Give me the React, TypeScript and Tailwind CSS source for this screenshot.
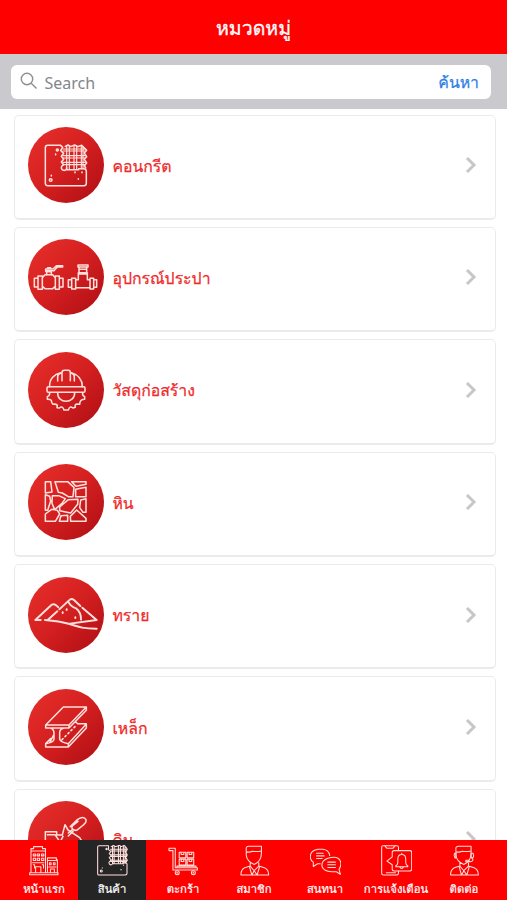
import React from "react";

const THAI = "font-['Loma','Liberation_Sans',sans-serif]";

type Kind = "block" | "pipes" | "helmet" | "stone" | "sand" | "steel" | "soil";

// Every category drawing shares a 228-unit disc.
const discBox: Record<Kind, string> = {
  block: "86 52 228 228",
  pipes: "86 45 228 228",
  helmet: "86 52 228 228",
  stone: "86 45 228 228",
  sand: "86 52 228 228",
  steel: "86 52 228 228",
  soil: "86 52 228 228",
};

const drawings: Record<Kind, React.ReactNode> = {
  block: (
    <>
      <path d="M184 107H145Q138 107 138 114V221Q138 228 145 228H254Q261 228 261 221V185Q261 177 253 177H238V180H202V173A8 8 0 1 1 188 169L193 165L186 157L193 149L186 140L193 131L184 122L190 113Z" />
      <path d="M202 108V177M210 108V177M224 108V177M232 108V177M246 108V177M251 112V177" strokeWidth="3.5" />
      <path d="M191 118H258M191 124H258M191 138H258M191 145H258M191 158H258M191 165H258" strokeWidth="3.5" />
      <path d="M198 110L206 106L214 111L226 106L235 111L247 107L256 116L262 122L255 130L262 141L255 149L262 160L255 168L259 175" />
      <circle cx="174" cy="121" r="3" /><circle cx="154" cy="211" r="4" />
      <path d="M169 133V135M156 197V199M237 207V209M248 187V189M227 187V189" />
    </>
  ),
  pipes: (
    <>
      <path d="M105 163H116V189H105ZM116 156H129V196H116ZM168 156H180V196H168ZM180 163H191V189H180ZM129 161L137 152H160L168 161V187L160 194H137L129 187ZM129 176V194" />
      <path d="M142 152V143H156V152M139 142V135H161L172 125H190V129H174L164 140H142ZM145 134V131H154V134" />
      <path d="M207 167H217V190H207ZM217 163H229V195H217ZM272 163H283V195H272ZM283 167H292V190H283ZM229 167H237V146H264V167H272M229 191H272M236 123H266V129H236ZM239 129H262V146H239ZM239 136H262M238 150H263" />
    </>
  ),
  helmet: (
    <>
      <rect x="143" y="156" width="114" height="17" rx="4" />
      <path d="M151 156C149 133 166 118 184 114M216 114C236 120 249 135 249 156M175 139V126Q175 118 184 116M225 139V126Q225 118 216 115M188 138V114Q188 107 195 107H207Q213 107 213 114V138" />
      <path d="M175 175C174 208 226 208 226 175M151 174Q152 183 144 186V194Q158 193 157 203L161 209Q169 207 174 212L173 219L180 220Q190 212 194 226H207Q211 212 221 220L228 218Q225 208 234 208L241 209Q241 194 256 194V186Q248 183 250 174" />
    </>
  ),
  stone: (
    <path d="M138 98H154L158 129L138 132ZM167 98H205L224 115L221 143H207L189 132L177 130ZM217 98H260V106L230 112ZM229 121L260 115V143H229ZM138 137L151 142L154 156L145 184H138ZM159 140H178L198 149L188 163L166 182L158 163ZM207 152L236 151L235 166L214 192L181 185L181 174ZM244 153L260 149V190H251L241 176ZM157 181L174 184L181 195L168 217H138V195ZM185 200L205 199V217H180ZM232 183L260 208V217H214L213 202Z" />
  ),
  sand: (
    <g strokeWidth="5.8">
      <path d="M108 181L153 139Q161 130 170 137L177 143M108 181H124M145 181L174 155M180 149L209 122Q216 115 224 121L243 139M208 128Q214 140 230 146Q246 159 245 180M249 144L292 181L212 192M137 181C175 184 193 188 211 193C241 203 254 207 292 207" />
      <path d="M190 158V160M202 149V151M228 173V175" />
    </g>
  ),
  steel: (
    <path d="M192 106H261L209 160H139ZM139 160V169H209L261 116V106M209 160V169M152 169Q164 172 164 184V202Q163 213 139 216V226H207V216Q185 213 181 203V183Q181 171 196 169M151 213L164 188M139 216L154 201M207 216L261 157V169L207 226M229 149L234 156H261M188 204L191 201M197 195L200 192M206 186L209 183M215 177L218 174M224 168L227 165" />
  ),
  soil: (
    <path d="M138 190V144H172V154H189L197 123L206 139M213 129L235 107Q253 96 260 108Q262 117 252 124L232 140Q224 141 220 136Q215 132 220 126L236 113M144 153H167L180 172M191 158L178 184M206 139L241 162L246 170M207 157L221 143M207 148L219 138" />
  ),
};

const categories: { label: string; kind: Kind }[] = [
  { label: "คอนกรีต", kind: "block" },
  { label: "อุปกรณ์ประปา", kind: "pipes" },
  { label: "วัสดุก่อสร้าง", kind: "helmet" },
  { label: "หิน", kind: "stone" },
  { label: "ทราย", kind: "sand" },
  { label: "เหล็ก", kind: "steel" },
  { label: "ดิน", kind: "soil" },
];

function Card({ label, kind }: { label: string; kind: Kind }) {
  return (
    <li className="flex h-[105.4px] shrink-0 items-start rounded-[5px] border border-b-2 border-[#ebebeb] bg-white pt-[11.6px] pr-[18px] pl-[13.4px]">
      <div className="size-[76px] shrink-0 rounded-full bg-linear-to-br from-[#e8302b] via-[#d41f20] to-[#ad0d14]">
        <svg viewBox={discBox[kind]} className="size-full" fill="none" stroke="#ffe0dc" strokeWidth="4.6" strokeLinecap="round" strokeLinejoin="round">
          {drawings[kind]}
        </svg>
      </div>
      <div className="flex h-[76px] flex-1 items-center justify-between pl-[8px]">
        <span className={`${THAI} pt-[3px] text-[15.8px] leading-6 whitespace-nowrap text-[#ef2929] [-webkit-text-stroke:0.25px_#ef2929]`}>{label}</span>
        <svg viewBox="0 0 12 18" className="h-[18px] w-[12px]" fill="none" stroke="#c7c7c7" strokeWidth="3">
          <path d="M2 2L9 9L2 16" />
        </svg>
      </div>
    </li>
  );
}

const Person = () => (
  <path d="M18 31V14Q16 3 28 4H64V24Q64 49 42 59Q20 50 18 31ZM18 21Q30 23 37 19Q51 21 64 18M30 54V64L42 78L56 64V54M30 64L13 69Q1 76 2 91H86Q86 74 73 69L56 64M28 67L35 91L42 78L51 91L58 67" />
);

const tabs: { label: string; width: string; active?: boolean; icon: React.ReactNode }[] = [
  {
    label: "หน้าแรก",
    width: "w-[68px]",
    icon: (
      <>
        <path d="M6 84V11H14V5H41V11H50V84M6 18H50M56 84V39H83V45H86V84M56 47H86M2 84H88V90H2ZM20 84V66H36V84M65 84V73H77V84" />
        <path d="M13 27H20V33H13ZM25 27H32V33H25ZM38 27H45V33H38ZM13 40H20V47H13ZM25 40H32V47H25ZM38 40H45V47H38ZM11 54H45M13 60H17V70M40 60H44V70M62 54H67V60H62ZM74 54H79V60H74ZM60 67H82" />
      </>
    ),
  },
  {
    label: "สินค้า",
    width: "w-[68px]",
    active: true,
    icon: (
      <>
        <path d="M35 2H6Q2 2 2 6V87Q2 91 6 91H86Q91 91 91 86V57Q90 54 85 54H77V57H48V52A6 6 0 1 1 39 49L43 45L37 38L43 32L37 26L42 20L35 14Z" />
        <path d="M47 3V56M52 3V56M65 3V56M71 3V56M80 3V56M85 3V56M41 13H90M41 18H90M41 30H90M41 35H90M41 46H90M41 50H90M43 5L50 1L56 5L68 1L74 5L82 1L88 7L92 13L87 21L92 30L87 37L92 46L87 53" />
        <circle cx="29" cy="12" r="2" /><circle cx="13" cy="79" r="3" />
        <path d="M16 69V70M72 75H74M80 61H81" />
      </>
    ),
  },
  {
    label: "ตะกร้า",
    width: "w-[74px]",
    icon: (
      <>
        <path d="M3 10H22V69H89V76H15V17H3ZM27 69V64H85V69M34 22H54V39H34ZM58 22H78V39H58ZM34 43H54V61H34ZM58 43H78V61H58ZM40 22V29H48V22M64 22V29H72V22M40 43V50H48V43M64 43V50H72V43" />
        <circle cx="28" cy="84" r="6" /><circle cx="77" cy="84" r="6" /><circle cx="28" cy="84" r="1" /><circle cx="77" cy="84" r="1" />
      </>
    ),
  },
  { label: "สมาชิก", width: "w-[68px]", icon: <g transform="translate(4 0)"><Person /></g> },
  {
    label: "สนทนา",
    width: "w-[74px]",
    icon: (
      <>
        <path d="M24 13Q1 17 1 35Q1 47 10 52V65L23 57H31M24 13H39Q57 15 60 32M20 25H40M20 33H43M20 41H37" />
        <path d="M80 81L92 89L88 74Q101 53 85 40Q75 34 54 40Q32 48 37 67Q44 81 65 81ZM54 52H77M54 60H77M54 68H77" />
      </>
    ),
  },
  {
    label: "การแจ้งเตือน",
    width: "w-[68px]",
    icon: (
      <>
        <path d="M53 17V6Q53 2 48 2H6Q2 2 2 7V86Q2 91 7 91H48Q53 91 53 86V79M11 2L18 10H36L43 2M16 84H44" />
        <path d="M40 17H87Q93 17 93 23V73Q93 79 87 79H40Q34 79 34 73V60L18 49L34 36V23Q34 17 40 17ZM45 66H81V62Q75 62 75 50V43Q75 29 63 29Q51 29 51 43V50Q51 62 45 62ZM57 67Q62 76 68 67M63 29V25" />
      </>
    ),
  },
  {
    label: "ติดต่อ",
    width: "w-[68px]",
    icon: (
      <g transform="translate(3 0)">
        <Person />
        <path d="M18 25H14Q10 31 15 39H18V25M64 25H70Q74 32 69 39H64V25M69 39V47Q65 53 56 49M48 46H57V51H48Z" />
      </g>
    ),
  },
];

export default function App() {
  return (
    <main className="flex h-[900px] w-[507px] flex-col overflow-hidden bg-white">
      <header className="flex h-[54px] shrink-0 items-center justify-center bg-[#ff0000] pt-[3px]">
        <h1 className={`${THAI} text-[19.5px] leading-7 text-white [-webkit-text-stroke:0.3px_white]`}>หมวดหมู่</h1>
      </header>
      <div className="h-[54.5px] shrink-0 bg-[#c9c9ce] pt-[10.5px] pr-[16px] pl-[10.5px]">
        <div className="flex h-[34px] items-center rounded-[6px] bg-white pr-[12px] pl-[9px]">
          <svg viewBox="0 0 18 18" className="mb-[2px] size-[18px]" fill="none" stroke="#8e8e93" strokeWidth="1.4">
            <circle cx="7" cy="7" r="5.7" />
            <path d="M11.2 11.2L16.5 16.5" />
          </svg>
          <span className="flex-1 pt-[2px] pl-[7px] font-['Noto_Sans',sans-serif] text-[16px] leading-6 text-[#85858a]">Search</span>
          <button className={`${THAI} pt-[3px] text-[15.8px] leading-6 text-[#2f7de9] [-webkit-text-stroke:0.25px_#2f7de9]`}>ค้นหา</button>
        </div>
      </div>
      <ul className="flex min-h-0 flex-1 flex-col gap-[7px] overflow-hidden pt-[6px] pr-[11.5px] pl-[14px]">
        {categories.map((c) => (
          <Card key={c.kind} label={c.label} kind={c.kind} />
        ))}
      </ul>
      <nav className="flex h-[60px] shrink-0 bg-[#ff0000] pl-[10px]">
        {tabs.map((t) => (
          <button key={t.label} className={`${t.width} ${t.active ? "bg-[#252525]" : ""} flex shrink-0 flex-col items-center pt-[5px]`}>
            <svg viewBox="0 0 94 94" className="size-[31px] shrink-0" fill="none" stroke="#ffe0dc" strokeWidth="3.2" strokeLinecap="round" strokeLinejoin="round">
              {t.icon}
            </svg>
            <span className={`${THAI} mt-[5px] text-[11.3px] leading-4 whitespace-nowrap text-white [-webkit-text-stroke:0.2px_white]`}>{t.label}</span>
          </button>
        ))}
      </nav>
    </main>
  );
}
